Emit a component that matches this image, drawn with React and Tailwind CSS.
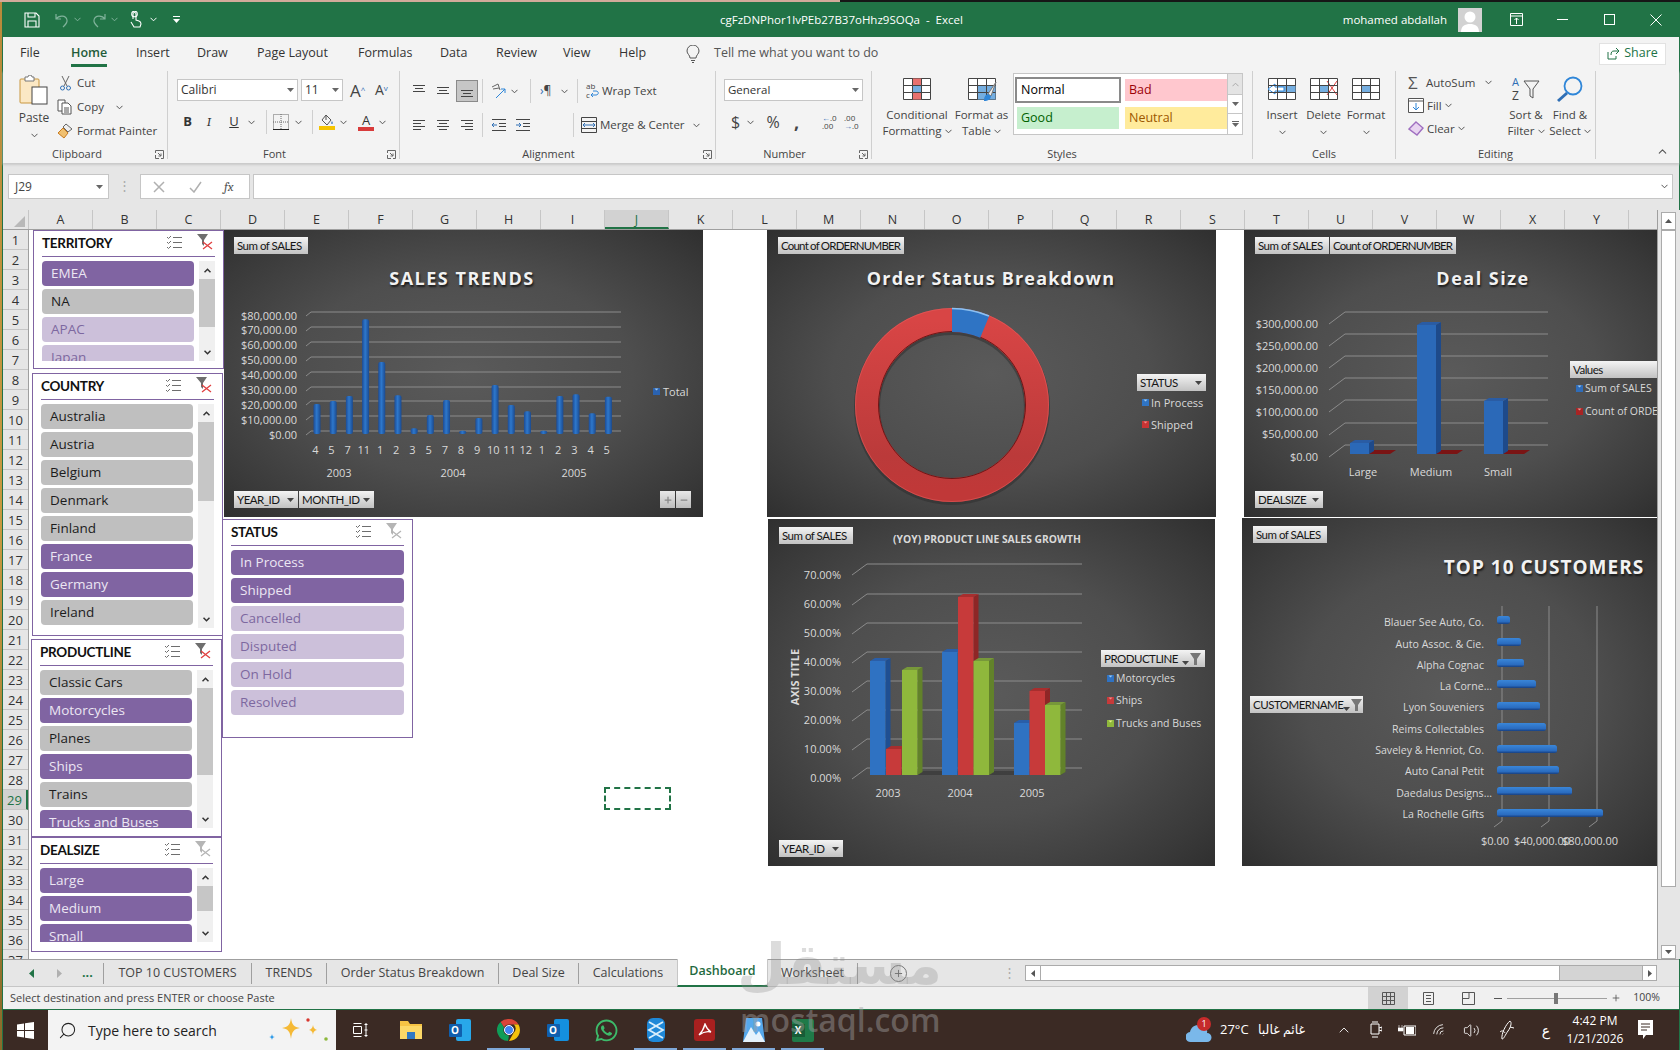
import React from "react";
import { FaWhatsapp } from "react-icons/fa";
import { Search, ChevronUp, Wifi, Volume2, Plus, Minus } from "lucide-react";

const lato = "font-['Lato',sans-serif]";

const Chev = ({ className = "", color = "#555", weight = 1 }) => (
  <svg width="7" height="5" viewBox="0 0 7 5" className={className} fill="none" stroke={color} strokeWidth={weight}>
    <path d="M.5 .8 3.5 3.8 6.5 .8" />
  </svg>
);
const Tri = ({ color = "#444" }) => (
  <svg width="7" height="4" viewBox="0 0 9 5" className="shrink-0"><path d="M0 0h9L4.5 5z" fill={color} /></svg>
);
const Sep = () => <div className="w-px h-[24px] bg-[#cfcfcf] shrink-0" />;

/* ---- quick access ---- */
const QuickAccess = () => (
  <div className="w-[717px] flex items-center pl-[21px] shrink-0">
    <svg width="16" height="16" viewBox="0 0 16 16" fill="none" stroke="#fff" strokeWidth="1.1">
      <path d="M1 1h11l3 3v11H1z" /><path d="M4 1v4h7V1M4 15v-6h8v6" />
    </svg>
    <svg width="16" height="16" viewBox="0 0 16 16" fill="none" stroke="#7fb29a" strokeWidth="1.2" className="ml-[14px]">
      <path d="M2 2v5h5M2 7c3-4 10-4 11 1 .6 3-2 5-4 7" />
    </svg>
    <Chev className="ml-[4px]" color="#7fb29a" />
    <svg width="16" height="16" viewBox="0 0 16 16" fill="none" stroke="#7fb29a" strokeWidth="1.2" className="ml-[10px]">
      <path d="M14 2v5H9M14 7C11 3 4 3 3 8c-.6 3 2 5 4 7" />
    </svg>
    <Chev className="ml-[4px]" color="#7fb29a" />
    <svg width="14" height="17" viewBox="0 0 14 17" fill="none" stroke="#fff" strokeWidth="1.1" className="ml-[10px]">
      <path d="M5 8V3a1.5 1.5 0 0 1 3 0v6l3 1c1.500.5 2 1 2 3l-1 3H6L3 11" /><circle cx="6.500" cy="3" r="2.800" />
    </svg>
    <Chev className="ml-[8px]" color="#fff" />
    <svg width="9" height="9" viewBox="0 0 9 9" fill="#fff" className="ml-[15px]"><path d="M1 1h7v1H1zM1 4h7L4.500 8z" /></svg>
  </div>
);

const TitleBar = () => (
  <div className="h-[35px] bg-[#217346] flex items-center text-white shrink-0">
    <QuickAccess />
    <span className="text-[11.5px] whitespace-nowrap">cgFzDNPhor1lvPEb27B37oHhz9SOQa&nbsp; -&nbsp; Excel</span>
    <div className="ml-auto flex items-center">
      <span className="text-[11.5px] mr-[11px] whitespace-nowrap">mohamed abdallah</span>
      <div className="w-[24px] h-[24px] bg-[#d2d2d2] flex items-end justify-center overflow-hidden mr-[11px]">
        <svg width="20" height="22" viewBox="0 0 20 22" fill="#fff"><circle cx="10" cy="7" r="5.500" /><path d="M1 22c0-6 4-8 9-8s9 2 9 8z" /></svg>
      </div>
      <div className="w-[46px] flex justify-center">
        <svg width="13" height="13" viewBox="0 0 13 13" fill="none" stroke="#fff"><path d="M.5 .5h12v12H.5zM.5 3h12M6.500 11V5M4.500 7l2-2 2 2" /></svg>
      </div>
      <div className="w-[47px] flex justify-center"><div className="w-[11px] h-px bg-white" /></div>
      <div className="w-[47px] flex justify-center"><div className="w-[11px] h-[11px] border border-white" /></div>
      <div className="w-[46px] flex justify-center">
        <svg width="12" height="12" viewBox="0 0 12 12" stroke="#fff"><path d="M.5 .5l11 11M11.500 .5l-11 11" /></svg>
      </div>
    </div>
  </div>
);

const menuItems = [
  ["File", "w-[51px]"], ["Home", "w-[65px]"], ["Insert", "w-[61px]"], ["Draw", "w-[60px]"],
  ["Page Layout", "w-[101px]"], ["Formulas", "w-[82px]"], ["Data", "w-[56px]"], ["Review", "w-[67px]"],
  ["View", "w-[56px]"], ["Help", "w-[67px]"],
];

const MenuBar = () => (
  <div className="h-[33px] bg-[#f3f3f3] flex items-center pl-[17px] text-[12.5px] text-[#333] shrink-0">
    {menuItems.map(([name, w]) => (
      <div key={name} className={w}>
        <span className={name === "Home" ? "relative font-semibold text-[#1f5c3a]" : ""}>
          {name}
          {name === "Home" && <span className="absolute left-0 right-0 top-[20px] h-[3px] bg-[#217346]" />}
        </span>
      </div>
    ))}
    <svg width="14" height="18" viewBox="0 0 14 18" fill="none" stroke="#555" className="mr-[14px]">
      <path d="M4 13c0-3-3-4-3-7a6 6 0 0 1 12 0c0 3-3 4-3 7zM5 15.500h4M6 17.500h2" />
    </svg>
    <span className="text-[#555]">Tell me what you want to do</span>
    <div className="ml-auto mr-[13px] w-[67px] h-[22px] bg-white border border-[#e2e2e2] flex items-center justify-center gap-[4px] text-[#217346] font-medium">
      <svg width="13" height="13" viewBox="0 0 13 13" fill="none" stroke="#217346"><path d="M9 1l3 3-3 3M12 4H7C5 4 4 5 4 8M1 5v7h8v-3" /></svg>
      Share
    </div>
  </div>
);

/* ---- ribbon ---- */
const Group = ({ label, width, launcher = true, labelClass = "", children }) => (
  <div className={`relative h-[88px] mt-[1px] border-r border-[#cfcfcf] flex flex-col shrink-0 ${width}`}>
    <div className="h-[78px]">{children}</div>
    <div className={`text-center text-[11px] leading-[10px] text-[#444] ${labelClass}`}>{label}</div>
    {launcher && (
      <svg width="9" height="9" viewBox="0 0 9 9" fill="none" stroke="#666" className="absolute right-[3px] bottom-[0px]">
        <path d="M.5 3V.5H8.500V8.500H6M3 3l3 3M6 3.500V6H3.500M.5 5v3.500H4" />
      </svg>
    )}
  </div>
);

const PasteIcon = () => (
  <svg width="30" height="30" viewBox="0 0 30 30">
    <rect x="1" y="4" width="19" height="24" rx="1" fill="#fbe8c4" stroke="#c8963e" />
    <path d="M6 4V2h3a2 2 0 0 1 4 0h2v4H6z" fill="#fff" stroke="#777" />
    <rect x="13" y="12" width="15" height="17" fill="#fff" stroke="#444" />
  </svg>
);
const CutIcon = () => (
  <svg width="13" height="16" viewBox="0 0 13 16" fill="none" stroke="#666">
    <path d="M3 1l5 10M10 1 5 11" />
    <circle cx="3.500" cy="13" r="2" stroke="#2f6fb5" /><circle cx="9.500" cy="13" r="2" stroke="#2f6fb5" />
  </svg>
);
const CopyIcon = () => (
  <svg width="16" height="16" viewBox="0 0 16 16" fill="#fff" stroke="#555">
    <path d="M1 1h7v11H1z" /><path d="M5 4h6l3 3v8H5z" /><path d="M7 9h5M7 11h5M7 13h5" />
  </svg>
);
const PainterIcon = () => (
  <svg width="16" height="16" viewBox="0 0 16 16" fill="none">
    <path d="M9 1l6 5-4 3-5-5z" fill="#eee" stroke="#666" />
    <path d="M6 5l5 5-4 5-6-5z" fill="#f0c070" stroke="#c87a1e" />
  </svg>
);

const Clipboard = () => (
  <Group label="Clipboard" width="w-[165px]" labelClass="pr-[16px]">
    <div className="flex h-full">
      <div className="w-[46px] ml-[8px] flex flex-col items-center pt-[4px] shrink-0 text-[12px] text-[#444]">
        <PasteIcon />
        <span className="mt-[4px] leading-[18px]">Paste</span>
        <Chev className="mt-[6px]" />
      </div>
      <div className="flex flex-col text-[11.5px] text-[#444]">
        <div className="h-[24px] flex items-center gap-[5px] pl-[2px]"><CutIcon /> Cut</div>
        <div className="h-[24px] flex items-center gap-[4px]"><CopyIcon /> Copy <Chev className="ml-[8px]" /></div>
        <div className="h-[24px] flex items-center gap-[4px] whitespace-nowrap"><PainterIcon /> Format Painter</div>
      </div>
    </div>
  </Group>
);

const Box = ({ className = "", children }) => (
  <div className={`h-[22px] bg-white border border-[#c6c6c6] flex items-center justify-between px-[3px] text-[12px] text-[#333] shrink-0 ${className}`}>
    {children}
  </div>
);

const FontGroup = () => (
  <Group label="Font" width="w-[232px]" labelClass="pr-[18px]">
    <div className="flex items-center pl-[9px] mt-[8px]">
      <Box className="w-[121px]"><span>Calibri</span><Tri color="#666" /></Box>
      <Box className="w-[42px] ml-[3px]"><span>11</span><Tri color="#666" /></Box>
      <span className="ml-[7px] w-[16px] text-[17px] leading-none text-[#444]">A<sup className="text-[8px] text-[#2f6fb5]">^</sup></span>
      <span className="ml-[9px] w-[14px] text-[14px] leading-none text-[#444]">A<sup className="text-[8px] text-[#2f6fb5]">v</sup></span>
    </div>
    <div className="flex items-center mt-[10px] h-[22px] text-[13px] text-[#333]">
      <div className="w-[24px] text-right font-bold">B</div>
      <div className="w-[34px] text-center italic font-serif">I</div>
      <div className="w-[16px] text-center underline">U</div>
      <Chev className="ml-[6px]" />
      <div className="w-[11px]" />
      <Sep />
      <svg width="16" height="16" viewBox="0 0 16 16" fill="none" stroke="#666" strokeDasharray="1 1" className="ml-[6px]">
        <path d="M.5 .5h15v15H.5zM8 0v16M0 8h16" /><path d="M0 15.500h16" stroke="#222" strokeDasharray="0" />
      </svg>
      <Chev className="ml-[6px]" />
      <div className="w-[10px]" />
      <Sep />
      <div className="ml-[6px] w-[16px] flex flex-col items-center">
        <svg width="14" height="12" viewBox="0 0 14 12" fill="none" stroke="#555"><path d="M6 1l5 5-4 5-5-5zM6 1v5" /><path d="M12 7c1 2 1 3 0 3s-1-1 0-3z" fill="#2f6fb5" stroke="none" /></svg>
        <div className="w-[16px] h-[4px] bg-[#f5c400]" />
      </div>
      <Chev className="ml-[5px]" />
      <div className="ml-[11px] w-[16px] flex flex-col items-center leading-none">
        <span className="text-[13px] leading-[12px] text-[#333]">A</span>
        <div className="w-[16px] h-[4px] mt-[1px] bg-[#d83b3b]" />
      </div>
      <Chev className="ml-[5px]" />
    </div>
  </Group>
);

const Lines = ({ d }) => (
  <svg width="14" height="14" viewBox="0 0 14 14" stroke="#444" fill="none"><path d={d} /></svg>
);
const Cell = ({ className = "", children }) => (
  <div className={`h-[22px] flex items-center justify-center shrink-0 ${className}`}>{children}</div>
);

const Alignment = () => (
  <Group label="Alignment" width="w-[316px]" labelClass="pr-[18px]">
    <div className="flex items-center pl-[7px] mt-[8px] text-[11.5px] text-[#444]">
      <Cell className="w-[24px]"><Lines d="M1 1.500h12M3 4.500h8M1 7.500h12" /></Cell>
      <Cell className="w-[24px]"><Lines d="M1 3.500h12M3 6.500h8M1 9.500h12" /></Cell>
      <Cell className="w-[22px] ml-[1px] bg-[#c6c6c6] border border-[#8a8a8a]"><Lines d="M1 6.500h12M3 9.500h8M1 12.500h12" /></Cell>
      <div className="w-[4px]" />
      <Sep />
      <svg width="17" height="17" viewBox="0 0 17 17" fill="none" stroke="#666" className="ml-[7px]">
        <path d="M2 4l6-3 2 6M3 6l6-1" /><path d="M6 15 15 6M15 6h-4M15 6v4" stroke="#2f86d8" />
      </svg>
      <Chev className="ml-[4px]" />
      <div className="w-[12px]" />
      <Sep />
      <span className="ml-[9px] w-[16px] text-[12px] leading-none"><span className="text-[#2f6fb5]">›</span>¶</span>
      <Chev className="ml-[5px]" />
      <div className="w-[9px]" />
      <Sep />
      <svg width="16" height="18" viewBox="0 0 16 18" fill="none" className="ml-[7px]">
        <text x="1" y="7" fontSize="8" fill="#444">ab</text><text x="1" y="16" fontSize="8" fill="#444">c</text>
        <path d="M6 13h5c3 0 3-4 0-4H8M8 11l-2 2 2 2" stroke="#2f86d8" />
      </svg>
      <span className="ml-[1px] whitespace-nowrap">Wrap Text</span>
    </div>
    <div className="flex items-center pl-[7px] mt-[10px] text-[11.5px] text-[#444]">
      <Cell className="w-[24px]"><Lines d="M1 2.500h12M1 5.500h8M1 8.500h12M1 11.500h8" /></Cell>
      <Cell className="w-[24px]"><Lines d="M1 2.500h12M3 5.500h8M1 8.500h12M3 11.500h8" /></Cell>
      <Cell className="w-[23px]"><Lines d="M1 2.500h12M5 5.500h8M1 8.500h12M5 11.500h8" /></Cell>
      <div className="w-[4px]" />
      <Sep />
      <svg width="15" height="14" viewBox="0 0 15 14" fill="none" stroke="#444" className="ml-[8px]">
        <path d="M1 1.500h14M8 5.500h7M8 8.500h7M1 12.500h14" /><path d="M6 7H1M3 5 1 7l2 2" stroke="#2f6fb5" />
      </svg>
      <svg width="15" height="14" viewBox="0 0 15 14" fill="none" stroke="#444" className="ml-[9px]">
        <path d="M1 1.500h14M8 5.500h7M8 8.500h7M1 12.500h14" /><path d="M1 7h5M4 5l2 2-2 2" stroke="#2f6fb5" />
      </svg>
      <div className="w-[43px]" />
      <Sep />
      <svg width="16" height="16" viewBox="0 0 16 16" fill="none" stroke="#444" className="ml-[7px]">
        <path d="M.5 .5h15v15H.5zM0 4.500h16M0 11.500h16" /><path d="M2 8h12M4 6 2 8l2 2M12 6l2 2-2 2" stroke="#2f6fb5" />
      </svg>
      <span className="ml-[3px] whitespace-nowrap">Merge &amp; Center</span>
      <Chev className="ml-[8px]" />
    </div>
  </Group>
);

const NumberGroup = () => (
  <Group label="Number" width="w-[156px]" labelClass="pr-[18px]">
    <div className="pl-[8px] mt-[8px]"><Box className="w-[139px]"><span className="text-[11.5px]">General</span><Tri color="#666" /></Box></div>
    <div className="flex items-center pl-[14px] mt-[10px] h-[22px] text-[16px] text-[#444]">
      <span className="w-[11px] text-center">$</span>
      <Chev className="ml-[6px]" />
      <span className="ml-[11px] w-[16px] text-center">%</span>
      <span className="ml-[13px] w-[8px] font-bold text-[18px] leading-[14px]">,</span>
      <div className="ml-[20px] w-[16px] text-[8px] leading-[8px] whitespace-nowrap"><span className="text-[#2f6fb5]">←</span>.0<br />.00</div>
      <div className="ml-[6px] w-[16px] text-[8px] leading-[8px] whitespace-nowrap">.00<br /><span className="text-[#2f6fb5]">→</span>.0</div>
    </div>
  </Group>
);

const GridIcon = ({ children, w = 28 }) => (
  <svg width={w} height="22" viewBox="0 0 28 22" fill="#fff" stroke="#444" strokeWidth="1">
    <path d="M.5 .5h27v21H.5z" />
    {children}
    <path d="M.5 7.500h27M.5 14.500h27M9.500 .5v21M18.500 .5v21" fill="none" />
  </svg>
);

const CondIcon = () => (
  <GridIcon>
    <path d="M9.500 .5h9v7h-9zM9.500 14.500h9v7h-9z" fill="#e8716f" stroke="none" />
    <path d="M9.500 7.500h9v7h-9z" fill="#75aee0" stroke="none" />
  </GridIcon>
);
const TableIcon = () => (
  <div className="relative">
    <GridIcon><path d="M9.500 7.500h18v14h-18z" fill="#75aee0" stroke="none" /></GridIcon>
    <svg width="16" height="22" viewBox="0 0 16 22" className="absolute left-[14px] top-[3px]" fill="none">
      <path d="M14 1 6 13l3 2z" fill="#eee" stroke="#777" /><path d="M6 13c-3 1-4 3-4 7 4 0 7-2 7-5z" fill="#2f86d8" />
    </svg>
  </div>
);

const StyleBtn = ({ icon, top, bottom, width }) => (
  <div className={`flex flex-col items-center shrink-0 text-[11.5px] leading-[16px] text-[#444] whitespace-nowrap ${width}`}>
    <div className="h-[22px] mt-[7px] mb-[7px]">{icon}</div>
    <span>{top}</span>
    {bottom !== "" && <span className="flex items-center gap-[3px]">{bottom}<Chev /></span>}
  </div>
);

const StyleCell = ({ className, children }) => (
  <div className={`h-[22px] flex items-center pl-[4px] text-[12.5px] ${className}`}>{children}</div>
);

const Styles = () => (
  <Group label="Styles" width="w-[381px]" launcher={false}>
    <div className="flex">
      <StyleBtn width="w-[80px] ml-[5px]" icon={<CondIcon />} top="Conditional" bottom="Formatting" />
      <StyleBtn width="w-[49px]" icon={<TableIcon />} top="Format as" bottom="Table" />
      <div className="ml-[7px] mt-[2px] w-[230px] h-[62px] bg-white border border-[#c6c6c6] flex shrink-0">
        <div className="grid grid-cols-2 gap-x-[6px] gap-y-[6px] pl-[3px] pt-[5px] w-[213px] content-start">
          <StyleCell className="bg-white outline-2 outline-[#8a8a8a] text-black">Normal</StyleCell>
          <StyleCell className="bg-[#ffc7ce] text-[#9c0006]">Bad</StyleCell>
          <StyleCell className="bg-[#c6efce] text-[#006100]">Good</StyleCell>
          <StyleCell className="bg-[#ffeb9c] text-[#9c5700]">Neutral</StyleCell>
        </div>
        <div className="flex flex-col ml-auto w-[15px] border-l border-[#c6c6c6]">
          <div className="h-[20px] bg-[#e4e4e4] flex items-center justify-center"><Chev color="#aaa" className="rotate-180" /></div>
          <div className="h-[20px] border-y border-[#c6c6c6] flex items-center justify-center"><Tri color="#666" /></div>
          <div className="flex-1 flex flex-col items-center justify-center gap-[1px]"><div className="w-[7px] h-px bg-[#666]" /><Tri color="#666" /></div>
        </div>
      </div>
    </div>
  </Group>
);

const Cells = () => (
  <Group label="Cells" width="w-[143px]" launcher={false}>
    <div className="flex pl-[9px]">
      <StyleBtn width="w-[40px]" icon={
        <GridIcon w={30}>
          <path d="M9.500 7.500h18v7h-18z" fill="#75aee0" stroke="none" />
          <path d="M0 11l7-5v3h9v4H7v3z" fill="#fff" stroke="#2f86d8" />
        </GridIcon>} top="Insert" bottom="" />
      <StyleBtn width="w-[43px]" icon={
        <GridIcon>
          <path d="M9.500 7.500h9v7h-9z" fill="#75aee0" stroke="none" />
          <path d="M17 3l10 14M27 3 17 17" stroke="#e04040" fill="none" />
        </GridIcon>} top="Delete" bottom="" />
      <StyleBtn width="w-[42px]" icon={
        <GridIcon>
          <path d="M9.500 7.500h9v7h-9z" fill="#75aee0" stroke="none" />
        </GridIcon>} top="Format" bottom="" />
    </div>
    <div className="flex pl-[9px] mt-[7px]">
      <div className="w-[40px] flex justify-center"><Chev /></div>
      <div className="w-[43px] flex justify-center"><Chev /></div>
      <div className="w-[42px] flex justify-center"><Chev /></div>
    </div>
  </Group>
);

const Editing = () => (
  <Group label="Editing" width="w-[200px]" launcher={false}>
    <div className="flex text-[11.5px] text-[#444]">
      <div className="w-[108px] pl-[12px] shrink-0 flex flex-col">
        <div className="h-[23px] flex items-center gap-[5px] whitespace-nowrap">
          <span className="w-[13px] text-[17px] leading-none text-[#555]">Σ</span> AutoSum <Chev className="ml-[5px]" />
        </div>
        <div className="h-[23px] flex items-center gap-[3px]">
          <svg width="16" height="15" viewBox="0 0 16 15" fill="#fff" stroke="#555"><path d="M.5 .5h15v14H.5zM0 3h16" /><path d="M8 5v7M5 9l3 3 3-3" stroke="#2f86d8" fill="none" /></svg>
          Fill <Chev />
        </div>
        <div className="h-[23px] flex items-center gap-[3px]">
          <svg width="16" height="15" viewBox="0 0 16 15"><path d="M8 1l7 6-6 7-8-6z" fill="#e8d4f0" stroke="#9f6fc0" strokeWidth="1.400" /></svg>
          Clear <Chev />
        </div>
      </div>
      <div className="flex flex-col items-center w-[44px] shrink-0 leading-[16px] whitespace-nowrap">
        <svg width="30" height="26" viewBox="0 0 30 26" fill="none" className="mt-[5px] mb-[5px]">
          <text x="1" y="10" fontSize="11" fill="#2f6fb5">A</text><text x="1" y="24" fontSize="12" fill="#444">Z</text>
          <path d="M13 5h15l-6 8v9l-3-2v-7z" stroke="#555" />
        </svg>
        <span>Sort &amp;</span>
        <span className="flex items-center gap-[3px]">Filter <Chev /></span>
      </div>
      <div className="flex flex-col items-center w-[44px] shrink-0 leading-[16px] whitespace-nowrap">
        <svg width="30" height="28" viewBox="0 0 30 28" fill="none" className="mt-[4px] mb-[4px]">
          <circle cx="18" cy="11" r="8.500" stroke="#2f86d8" strokeWidth="1.800" /><path d="M12 18 3 26" stroke="#2f6fb5" strokeWidth="3" />
        </svg>
        <span>Find &amp;</span>
        <span className="flex items-center gap-[3px]">Select <Chev /></span>
      </div>
    </div>
  </Group>
);

const Ribbon = () => (
  <div className="h-[93px] bg-[#f3f3f3] flex shrink-0 relative shadow-[0_2px_2px_#c9c9c9]">
    <Clipboard />
    <FontGroup />
    <Alignment />
    <NumberGroup />
    <Styles />
    <Cells />
    <Editing />
    <div className="flex-1 flex items-end justify-end pr-[10px] pb-[5px]"><ChevronUp size={13} color="#555" /></div>
  </div>
);

const FormulaBar = () => (
  <div className="h-[45px] bg-[#e6e6e6] flex items-start pt-[9px] pl-[5px] shrink-0">
    <div className="w-[101px] h-[25px] bg-white border border-[#c6c6c6] flex items-center justify-between pl-[6px] pr-[5px] text-[12px] text-[#444]">
      J29 <Tri color="#666" />
    </div>
    <div className="w-[31px] flex justify-center text-[#aaa] text-[13px] leading-[22px]">⋮</div>
    <div className="w-[110px] h-[25px] bg-white border border-[#c6c6c6] flex items-center text-[#aaa] shrink-0">
      <svg width="12" height="12" viewBox="0 0 12 12" stroke="#b0b0b0" strokeWidth="1.500" className="ml-[12px]"><path d="M1 1l10 10M11 1 1 11" /></svg>
      <svg width="13" height="12" viewBox="0 0 13 12" stroke="#b0b0b0" strokeWidth="1.500" fill="none" className="ml-[24px]"><path d="M1 7l4 4 7-10" /></svg>
      <span className="ml-[22px] italic font-serif text-[13px] text-[#555]">fx</span>
    </div>
    <div className="ml-[3px] w-[1420px] h-[25px] bg-white border border-[#c6c6c6] flex items-center justify-end pr-[4px]"><Chev /></div>
  </div>
);

/* ---- sheet chrome ---- */
const cols = "ABCDEFGHIJKLMNOPQRSTUVWXY".split("");
const ColHeaders = () => (
  <div className="h-[20px] flex bg-[#e6e6e6] border-b border-[#9f9f9f] shrink-0 text-[12.5px] text-[#333]">
    <div className="w-[26px] border-r border-[#c6c6c6] flex items-end justify-end pr-[3px] pb-[2px]">
      <svg width="11" height="11"><path d="M11 0v11H0z" fill="#b8b8b8" /></svg>
    </div>
    {cols.map((c) => (
      <div key={c} className={`w-[64px] text-center leading-[19px] border-r border-[#c6c6c6] ${c === "J" ? "bg-[#d2d2d2] border-b-2 border-b-[#217346] text-[#217346]" : ""}`}>
        {c}
      </div>
    ))}
  </div>
);

const rows = Array.from({ length: 37 }, (_, i) => i + 1);
const RowHeaders = () => (
  <div className="w-[26px] shrink-0 bg-[#e6e6e6] border-r border-[#9f9f9f] overflow-hidden text-[13px] text-[#333]">
    {rows.map((r) => (
      <div key={r} className={`h-[20px] text-center leading-[20px] border-b border-[#c6c6c6] ${r === 29 ? "bg-[#d2d2d2] text-[#217346] border-r-2 border-r-[#217346]" : ""}`}>
        {r}
      </div>
    ))}
  </div>
);

/* ---- slicers ---- */
const MultiIcon = () => (
  <svg width="16" height="15" viewBox="0 0 16 15" fill="none" stroke="#6e6e6e">
    <path d="M1 2l1.500 1.500L5 1M1 7l1.500 1.500L5 6M1 12l1.500 1.500L5 11M7 2.500h9M7 7.500h9M7 12.500h9" />
  </svg>
);
const ClearIcon = ({ active }) => (
  <svg width="16" height="16" viewBox="0 0 16 16">
    <path d="M0 0h11L7 6v6L5 10V6z" fill={active ? "#6e6e6e" : "#b5b5b5"} />
    <path d="M6 8l9 7M15 8l-9 7" stroke={active ? "#e04040" : "#b5b5b5"} strokeWidth="1.300" />
  </svg>
);

const Item = ({ name, state }) => {
  const style =
    state === "on" ? "bg-[#8064a2] text-[#ece6f3]" :
    state === "dim" ? "bg-[#ccc0da] text-[#7d68a0]" :
    "bg-[#bfbfbf] text-[#1c1c1c]";
  return (
    <div className={`h-[25px] shrink-0 rounded-[4px] pl-[9px] text-[13.5px] leading-[25px] ${style}`}>{name}</div>
  );
};

const Slicer = ({ title, items, boxClass, listClass, thumbClass, clear = true, noScroll = false }) => (
  <div className={`border border-[#8064a2] bg-white px-[8px] shrink-0 ${boxClass}`}>
    <div className="h-[26px] flex items-center border-b border-[#8064a2] -mb-px pb-[1px]">
      <span className={`${lato} font-bold text-[13.5px] tracking-[-0.3px] text-[#111]`}>{title}</span>
      <div className="ml-auto flex items-center gap-[15px] -mt-[2px] pr-[2px]">
        <MultiIcon />
        <ClearIcon active={clear} />
      </div>
    </div>
    <div className="flex justify-between mt-[5px]">
      <div className={`flex flex-col gap-[3px] overflow-hidden ${noScroll ? "w-[173px]" : "w-[152px]"} ${listClass}`}>
        {items.map(([n, s]) => <Item key={n} name={n} state={s} />)}
      </div>
      {!noScroll && (
        <div className={`w-[16px] bg-[#f0f0f0] flex flex-col ${listClass}`}>
          <div className="h-[18px] flex items-center justify-center shrink-0"><Chev color="#333" weight={1.500} className="rotate-180" /></div>
          <div className={`bg-[#c6c6c6] shrink-0 ${thumbClass}`} />
          <div className="flex-1" />
          <div className="h-[18px] flex items-center justify-center shrink-0"><Chev color="#333" weight={1.500} /></div>
        </div>
      )}
    </div>
  </div>
);

/* ---- charts ---- */
const chartBg = "bg-[radial-gradient(ellipse_at_center,#5a5a5a_0%,#4e4e4e_50%,#393939_85%,#2f2f2f_100%)]";
const txt = "font-['Open_Sans',sans-serif]";

const Field = ({ className, label, arrow = true, filter = false }) => (
  <div className={`absolute h-[17px] flex items-center pl-[3px] pr-[4px] justify-between bg-gradient-to-b from-[#f4f4f4] to-[#c2c2c2] ${lato} text-[11.5px] tracking-[-0.5px] text-[#161616] whitespace-nowrap ${className}`}>
    <span>{label}</span>
    {filter ? (
      <span className="flex items-end gap-[1px]">
        <Tri color="#444" />
        <svg width="11" height="12" viewBox="0 0 11 12"><path d="M0 0h11L7 6v6H4V6z" fill="#777" /></svg>
      </span>
    ) : arrow && <Tri color="#444" />}
  </div>
);

const Marker = ({ x, y, c, h = "#9cc8f0" }) => (
  <g>
    <rect x={x} y={y - 4} width="7" height="7" fill={c} />
    <path d={`M${x + 1.500} ${y - 3.500}h4l-2 2z`} fill={h} />
  </g>
);

const Title = ({ x, y, size = 18, spacing = 1.500, children }) => (
  <text x={x} y={y} textAnchor="middle" dominantBaseline="central" fontSize={size} fontWeight="700" fill="#f2f2f2" letterSpacing={spacing} className={`${txt} [text-shadow:1px_2px_2px_#1a1a1a]`}>
    {children}
  </text>
);

const Label = ({ x, y, anchor = "start", size = 11, fill = "#d9d9d9", children }) => (
  <text x={x} y={y - 1} textAnchor={anchor} dominantBaseline="central" fontSize={size} fill={fill} className={txt}>{children}</text>
);

const Grid = ({ ys, x0, x1, dx, dy }) => (
  <g stroke="#8c8c8c" strokeWidth="1" fill="none">
    {ys.map((y) => <path key={y} d={`M${x0 - dx} ${y + dy} L${x0} ${y} H${x1}`} />)}
  </g>
);

const salesTop = [537, 528, 513, 283, 411, 511, 610, 570, 525, 617, 579, 480, 540, 559, 617, 513, 508, 565, 515];
const salesX = ["4", "5", "7", "11", "1", "2", "3", "5", "7", "8", "9", "10", "11", "12", "1", "2", "3", "4", "5"];
const salesY = ["$80,000.00", "$70,000.00", "$60,000.00", "$50,000.00", "$40,000.00", "$30,000.00", "$20,000.00", "$10,000.00", "$0.00"];

const SalesChart = () => (
  <div className={`relative w-[479px] h-[287px] shrink-0 ${chartBg}`}>
    <svg width="479" height="287" className="block">
      <defs>
        <linearGradient id="cyl" x1="0" x2="1" y1="0" y2="0">
          <stop offset="0" stopColor="#1c4c96" /><stop offset=".45" stopColor="#2e78cc" /><stop offset="1" stopColor="#1a4a90" />
        </linearGradient>
      </defs>
      <Title x={238} y={48}>SALES TRENDS</Title>
      <Grid ys={[82, 97, 112, 127, 142, 157, 171, 186, 201]} x0={87} x1={397} dx={5} dy={4} />
      {salesY.map((l, i) => <Label key={l} x={73} y={86 + i * 14.900} anchor="end">{l}</Label>)}
      {salesTop.map((t, i) => (
        <rect key={i} x={89.500 + i * 16.190} y={t / 3 - 5} width="7" height={204 - (t / 3 - 5)} rx="2" fill="url(#cyl)" />
      ))}
      {salesX.map((l, i) => <Label key={i} x={91.300 + i * 16.190} y={220} anchor="middle">{l}</Label>)}
      <Label x={115} y={243} anchor="middle">2003</Label>
      <Label x={229} y={243} anchor="middle">2004</Label>
      <Label x={350} y={243} anchor="middle">2005</Label>
      <Marker x={429} y={162} c="#2a62b0" />
      <Label x={439} y={162}>Total</Label>
    </svg>
    <Field className="left-[10px] top-[7px] w-[74px]" label="Sum of SALES" arrow={false} />
    <Field className="left-[10px] top-[261px] w-[64px]" label="YEAR_ID" />
    <Field className="left-[75px] top-[261px] w-[75px]" label="MONTH_ID" />
    <div className="absolute left-[436px] top-[261px] w-[15px] h-[17px] flex items-center justify-center bg-gradient-to-b from-[#e8e8e8] to-[#bdbdbd]"><Plus size={10} color="#888" strokeWidth={3} /></div>
    <div className="absolute left-[452px] top-[261px] w-[15px] h-[17px] flex items-center justify-center bg-gradient-to-b from-[#e8e8e8] to-[#bdbdbd]"><Minus size={10} color="#888" strokeWidth={3} /></div>
  </div>
);

const OrderChart = () => (
  <div className={`relative w-[449px] h-[287px] shrink-0 ${chartBg}`}>
    <svg width="449" height="287" className="block">
      <defs>
        <linearGradient id="ring" x1="0" x2="0" y1="0" y2="1">
          <stop offset="0" stopColor="#d84545" /><stop offset=".8" stopColor="#bb3a3a" /><stop offset="1" stopColor="#c03838" />
        </linearGradient>
      </defs>
      <Title x={224} y={48} spacing={1.200}>Order Status Breakdown</Title>
      <circle cx="185" cy="177" r="85" fill="none" stroke="#2c2c2c" strokeOpacity=".5" strokeWidth="26" />
      <circle cx="185" cy="175" r="85" fill="none" stroke="url(#ring)" strokeWidth="24" />
      <circle cx="185" cy="175" r="96.500" fill="none" stroke="#e86060" strokeOpacity=".5" />
      <circle cx="185" cy="175" r="73.500" fill="none" stroke="#6e1616" />
      <path d="M185 78 A97 97 0 0 1 222.400 85.500 L213.200 107.700 A73 73 0 0 0 185 102 Z" fill="#2f74c4" />
      <path d="M185 78.500 A96.500 96.500 0 0 1 222 86" fill="none" stroke="#8cc0f0" strokeWidth="1.500" />
      <Marker x={375} y={173} c="#2f74c4" />
      <Label x={384} y={173} size={11}>In Process</Label>
      <Marker x={375} y={195} c="#c83434" h="#f08a8a" />
      <Label x={384} y={195} size={11}>Shipped</Label>
    </svg>
    <Field className="left-[11px] top-[7px] w-[126px] tracking-[-0.8px]" label="Count of ORDERNUMBER" arrow={false} />
    <Field className="left-[370px] top-[144px] w-[69px]" label="STATUS" />
  </div>
);

const Bar3D = ({ x, w, top, base, front, side, cap, d = 5, u = 3 }) => (
  <g>
    <path d={`M${x + w} ${top} l${d} ${-u} V${base - u} l${-d} ${u} Z`} fill={side} />
    <path d={`M${x} ${top} l${d} ${-u} H${x + w + d} l${-d} ${u} Z`} fill={cap} />
    <rect x={x} y={top} width={w} height={base - top} fill={front} />
  </g>
);

const dealY = ["$300,000.00", "$250,000.00", "$200,000.00", "$150,000.00", "$100,000.00", "$50,000.00", "$0.00"];

const DealChart = () => (
  <div className={`relative w-[414px] h-[287px] shrink-0 overflow-hidden ${chartBg}`}>
    <svg width="414" height="287" className="block">
      <Title x={239} y={48}>Deal Size</Title>
      <Grid ys={[82, 104, 126, 148, 170, 193, 215]} x0={101} x1={304} dx={16} dy={12} />
      {dealY.map((l, i) => <Label key={l} x={74} y={94 + i * 22.170} anchor="end">{l}</Label>)}
      {[[106, 213], [173, 95], [240, 171]].map(([x, t]) => (
        <g key={x}>
          <path d={`M${x + 19} 224 l5 -4 h22 l-6 4 z`} fill="#7a1414" />
          <Bar3D x={x} w={19} top={t} base={224} front="#2b69b8" side="#1e4a8a" cap="#2a5ca4" />
        </g>
      ))}
      <Label x={119} y={242} anchor="middle">Large</Label>
      <Label x={187} y={242} anchor="middle">Medium</Label>
      <Label x={254} y={242} anchor="middle">Small</Label>
      <Marker x={332} y={159} c="#2f6cb8" />
      <Label x={341} y={159} size={10.500}>Sum of SALES</Label>
      <Marker x={332} y={182} c="#a82424" h="#ea9090" />
      <Label x={341} y={182} size={10.500}>Count of ORDERNUMBER</Label>
    </svg>
    <Field className="left-[11px] top-[7px] w-[74px]" label="Sum of SALES" arrow={false} />
    <Field className="left-[86px] top-[7px] w-[126px] tracking-[-0.8px]" label="Count of ORDERNUMBER" arrow={false} />
    <Field className="left-[326px] top-[131px] w-[100px]" label="Values" arrow={false} />
    <Field className="left-[11px] top-[261px] w-[68px]" label="DEALSIZE" />
  </div>
);

const yoyY = ["70.00%", "60.00%", "50.00%", "40.00%", "30.00%", "20.00%", "10.00%", "0.00%"];
const blue = { front: "#2f72c2", side: "#1f4f92", cap: "#2a5ea8" };
const red = { front: "#c73a3a", side: "#8e2626", cap: "#a82e2e" };
const green = { front: "#8fb83c", side: "#62822a", cap: "#77983a" };
const yoyBars = [
  [102, 142, blue], [118, 230, red], [134, 151, green],
  [174, 133, blue], [190, 78, red], [205.500, 142, green],
  [246, 204, blue], [261.500, 172, red], [277, 186, green],
];

const YoyChart = () => (
  <div className={`relative w-[447px] h-[347px] shrink-0 ${chartBg}`}>
    <svg width="447" height="347" className="block">
      <text x="219" y="20" textAnchor="middle" dominantBaseline="central" fontSize="10.300" fontWeight="700" fill="#d9d9d9" className={txt}>(YOY) PRODUCT LINE SALES GROWTH</text>
      <Grid ys={[45, 75, 104, 133, 162, 191, 220, 249]} x0={99} x1={314} dx={15} dy={11} />
      {yoyY.map((l, i) => <Label key={l} x={73} y={56 + i * 29} anchor="end">{l}</Label>)}
      <path d="M102 256 l5 -4 H298 l-5 4z" fill="#333" opacity=".6" />
      {yoyBars.map(([x, t, c]) => <Bar3D key={x} x={x} w={15.500} top={t} base={256} {...c} />)}
      <Label x={120} y={274} anchor="middle">2003</Label>
      <Label x={192} y={274} anchor="middle">2004</Label>
      <Label x={264} y={274} anchor="middle">2005</Label>
      <text x="26" y="158" transform="rotate(-90 26 158)" textAnchor="middle" dominantBaseline="central" fontSize="11" fontWeight="700" fill="#d9d9d9" className={txt}>AXIS TITLE</text>
      <Marker x={339} y={160} c="#2f72c2" />
      <Label x={348} y={160} size={10.500}>Motorcycles</Label>
      <Marker x={339} y={182} c="#c73a3a" h="#f08a8a" />
      <Label x={348} y={182} size={10.500}>Ships</Label>
      <Marker x={339} y={205} c="#8fb83c" h="#e6f08a" />
      <Label x={348} y={205} size={10.500}>Trucks and Buses</Label>
    </svg>
    <Field className="left-[11px] top-[8px] w-[74px]" label="Sum of SALES" arrow={false} />
    <Field className="left-[333px] top-[131px] w-[104px]" label="PRODUCTLINE" filter />
    <Field className="left-[11px] top-[321px] w-[64px]" label="YEAR_ID" />
  </div>
);

const customers = [
  ["Blauer See Auto, Co.", 105, 102, 268], ["Auto Assoc. & Cie.", 127, 124, 279], ["Alpha Cognac", 148, 145, 282],
  ["La Corne...", 169, 166, 294, 250], ["Lyon Souveniers", 190, 188, 298], ["Reims Collectables", 212, 209, 304],
  ["Saveley & Henriot, Co.", 233, 231, 315], ["Auto Canal Petit", 254, 252, 317],
  ["Daedalus Designs...", 276, 273, 330, 250], ["La Rochelle Gifts", 297, 295, 361],
];

const TopChart = () => (
  <div className={`relative w-[415px] h-[348px] shrink-0 overflow-hidden ${chartBg}`}>
    <svg width="415" height="348" className="block">
      <defs>
        <linearGradient id="hbar" x1="0" x2="0" y1="0" y2="1">
          <stop offset="0" stopColor="#3a86d8" /><stop offset=".7" stopColor="#2a6cc0" /><stop offset="1" stopColor="#173f80" />
        </linearGradient>
      </defs>
      <Title x={302} y={49} size={19} spacing={1}>TOP 10 CUSTOMERS</Title>
      <g stroke="#8c8c8c" fill="none">
        {[260, 307, 355].map((x) => <path key={x} d={`M${x} 88 V303 L${x - 8} 309`} />)}
      </g>
      {customers.map(([name, ly, by, end, right]) => (
        <g key={name}>
          <Label x={right || 242} y={ly} anchor="end" size={10.600}>{name}</Label>
          <rect x="255" y={by - 4} width={end - 255} height="8" rx="2.500" fill="url(#hbar)" />
        </g>
      ))}
      <Label x={253} y={323} anchor="middle">$0.00</Label>
      <Label x={300} y={323} anchor="middle">$40,000.00</Label>
      <Label x={348} y={323} anchor="middle">$80,000.00</Label>
    </svg>
    <Field className="left-[11px] top-[8px] w-[74px]" label="Sum of SALES" arrow={false} />
    <Field className="left-[8px] top-[178px] w-[113px]" label="CUSTOMERNAME" filter />
  </div>
);

const VScroll = () => (
  <div className="flex-1 bg-[#e6e6e6] border-l border-[#9f9f9f] flex flex-col items-center pl-[3px] pr-[4px]">
    <div className="w-[15px] h-[18px] mt-[2px] bg-white border border-[#ababab] flex items-center justify-center shrink-0"><svg width="7" height="4"><path d="M0 4h7L3.500 0z" fill="#555" /></svg></div>
    <div className="w-[15px] h-[657px] bg-white border border-[#ababab] shrink-0" />
    <div className="flex-1" />
    <div className="w-[15px] h-[14px] bg-white border border-[#ababab] flex items-center justify-center shrink-0"><svg width="7" height="4"><path d="M0 0h7L3.500 4z" fill="#555" /></svg></div>
  </div>
);

const Sheet = () => (
  <div className="relative w-[1628px] h-[729px] bg-white overflow-hidden flex shrink-0">
    <div className="w-[195px] shrink-0 flex flex-col">
      <Slicer title="TERRITORY" boxClass="ml-[4px] w-[191px] h-[139px]" listClass="h-[100px]" thumbClass="h-[48px]"
        items={[["EMEA", "on"], ["NA", "off"], ["APAC", "dim"], ["Japan", "dim"]]} />
      <Slicer title="COUNTRY" boxClass="ml-[3px] mt-[4px] w-[191px] h-[263px]" listClass="h-[224px]" thumbClass="h-[79px]"
        items={["Australia", "Austria", "Belgium", "Denmark", "Finland"].map((c) => [c, "off"]).concat([["France", "on"], ["Germany", "on"], ["Ireland", "off"]])} />
      <Slicer title="PRODUCTLINE" boxClass="ml-[2px] mt-[3px] w-[191px] h-[198px]" listClass="h-[158px]" thumbClass="h-[87px]"
        items={[["Classic Cars", "off"], ["Motorcycles", "on"], ["Planes", "off"], ["Ships", "on"], ["Trains", "off"], ["Trucks and Buses", "on"]]} />
      <Slicer title="DEALSIZE" clear={false} boxClass="ml-[2px] w-[191px] h-[115px]" listClass="h-[74px]" thumbClass="h-[25px]"
        items={[["Large", "on"], ["Medium", "on"], ["Small", "on"]]} />
    </div>
    <div className="w-[479px] shrink-0 flex flex-col">
      <SalesChart />
      <Slicer title="STATUS" noScroll clear={false} boxClass="-ml-[2px] mt-[2px] w-[191px] h-[219px]" listClass="h-[165px]"
        items={[["In Process", "on"], ["Shipped", "on"], ["Cancelled", "dim"], ["Disputed", "dim"], ["On Hold", "dim"], ["Resolved", "dim"]]} />
    </div>
    <div className="ml-[64px] w-[449px] shrink-0 flex flex-col items-center gap-[2px]">
      <OrderChart />
      <YoyChart />
    </div>
    <div className="ml-[26px] w-[416px] shrink-0 flex flex-col gap-px">
      <div className="pl-[2px]"><DealChart /></div>
      <TopChart />
    </div>
    {/* copied cell J29 */}
    <div className="absolute left-[575px] top-[557px] w-[67px] h-[23px] border-2 border-dashed border-[#217346]" />
  </div>
);

/* ---- tabs and status ---- */
const tabs = [
  ["TOP 10 CUSTOMERS", "w-[148px]"], ["TRENDS", "w-[75px]"], ["Order Status Breakdown", "w-[172px]"],
  ["Deal Size", "w-[80px]"], ["Calculations", "w-[99px]"],
];

const TabBar = () => (
  <div className="h-[28px] bg-[#e6e6e6] border-t border-[#9f9f9f] border-b border-b-[#c6c6c6] flex items-center text-[12.5px] text-[#444] shrink-0">
    <div className="w-[100px] flex items-center shrink-0 pl-[26px] text-[#217346]">
      <svg width="5" height="9"><path d="M5 0v9L0 4.500z" fill="#217346" /></svg>
      <svg width="5" height="9" className="ml-[23px]"><path d="M0 0v9l5-4.500z" fill="#b0b0b0" /></svg>
      <span className="ml-[20px] font-bold leading-[12px]">...</span>
    </div>
    {tabs.map(([t, w]) => (
      <div key={t} className={`h-[21px] border-l border-[#9f9f9f] flex items-center justify-center whitespace-nowrap shrink-0 ${w}`}>{t}</div>
    ))}
    <div className="w-[91px] h-[28px] -mt-px bg-white border-x border-[#c6c6c6] border-b-2 border-b-[#217346] font-semibold text-[#1f6a40] flex items-center justify-center shrink-0">Dashboard</div>
    <div className="w-[89px] text-center shrink-0">Worksheet</div>
    <div className="h-[21px] w-px bg-[#9f9f9f]" />
    <div className="ml-[32px] w-[17px] h-[17px] rounded-full border border-[#777] flex items-center justify-center shrink-0"><Plus size={11} color="#666" /></div>
    <div className="ml-[96px] text-[#aaa] leading-none">⋮</div>
    <div className="ml-[9px] w-[632px] h-[16px] flex border border-[#ababab] bg-[#d4d4d4] shrink-0">
      <div className="w-[15px] bg-white border-r border-[#ababab] flex items-center justify-center"><svg width="4" height="7"><path d="M4 0v7L0 3.500z" fill="#555" /></svg></div>
      <div className="w-[519px] bg-white border-r border-[#ababab]" />
      <div className="flex-1" />
      <div className="w-[14px] bg-white border-l border-[#ababab] flex items-center justify-center"><svg width="4" height="7"><path d="M0 0v7l4-3.500z" fill="#555" /></svg></div>
    </div>
  </div>
);

const StatusBar = () => (
  <div className="h-[22px] bg-[#f0f0f0] flex items-center pl-[7px] text-[11px] text-[#444] shrink-0">
    <span>Select destination and press ENTER or choose Paste</span>
    <div className="ml-auto flex items-center h-full">
      <div className="w-[40px] h-full bg-[#d2d2d2] flex items-center justify-center">
        <svg width="13" height="13" viewBox="0 0 13 13" fill="none" stroke="#555"><path d="M.5 .5h12v12H.5zM4.500 0v13M8.500 0v13M0 4.500h13M0 8.500h13" /></svg>
      </div>
      <div className="w-[40px] flex justify-center">
        <svg width="11" height="13" viewBox="0 0 11 13" fill="none" stroke="#555"><path d="M.5 .5h10v12H.5zM3 3.500h5M3 6.500h5M3 9.500h5" /></svg>
      </div>
      <div className="w-[40px] flex justify-center">
        <svg width="13" height="13" viewBox="0 0 13 13" fill="none" stroke="#555"><path d="M.5 .5h12v12H.5zM7 .5v6H.5" /></svg>
      </div>
      <div className="w-[8px] h-px bg-[#555] ml-[6px]" />
      <div className="relative w-[100px] h-px bg-[#a0a0a0] ml-[5px]">
        <div className="absolute left-[47px] -top-[5px] w-[4px] h-[11px] bg-[#777]" />
      </div>
      <Plus size={10} color="#555" className="ml-[4px]" />
      <span className="ml-[12px] mr-[19px] text-[10.5px]">100%</span>
    </div>
  </div>
);

/* ---- taskbar ---- */
const Slot = ({ width = "w-[49px]", active = false, children }) => (
  <div className={`relative h-full flex items-center justify-center shrink-0 ${width}`}>
    {children}
    {active && <div className="absolute bottom-0 left-[3px] right-[3px] h-[2px] bg-[#7fa8d8]" />}
  </div>
);

const OutlookIcon = ({ back = "bg-[#28a8ea]" }) => (
  <div className="relative w-[22px] h-[22px]">
    <div className={`absolute right-0 top-0 w-[15px] h-[22px] rounded-[2px] ${back}`} />
    <div className="absolute left-0 top-[5px] w-[13px] h-[13px] bg-[#0f5fae] rounded-[1px] text-white text-[10px] font-bold leading-[13px] text-center">O</div>
  </div>
);

const Taskbar = () => (
  <div className="h-[40px] bg-[#3b2a24] flex items-center text-white shrink-0">
    <Slot width="w-[45px]">
      <svg width="17" height="17" viewBox="0 0 17 17" fill="#fff"><path d="M0 2.500 7 1.500V8H0zM8 1.300 17 0v8H8zM0 9h7v6.500L0 14.500zM8 9h9v8l-9-1.300z" /></svg>
    </Slot>
    <div className="w-[288px] h-full bg-[#f3f3f3] flex items-center pl-[10px] text-[#222] text-[14px] shrink-0">
      <Search size={19} strokeWidth={1.300} className="-scale-x-100" color="#222" />
      <span className="ml-[11px]">Type here to search</span>
      <svg width="62" height="30" viewBox="0 0 62 30" className="ml-[50px]">
        <path d="M24 3c1 7 3 9 9 10-6 1-8 3-9 11-1-8-3-10-9-11 6-1 8-3 9-10z" fill="#f5b935" />
        <path d="M46 10c.500 3 1.500 4 4 5-2.500 .5-3.500 1.500-4 5-.5-3.500-1.500-4.500-4-5 2.500-1 3.500-2 4-5z" fill="#f5b935" />
        <path d="M5 19c.3 2 1 3 3 3-2 .4-2.700 1-3 3-.3-2-1-2.600-3-3 2 0 2.700-1 3-3z" fill="#2f9be8" />
        <circle cx="41" cy="5" r="1.700" fill="#d8382f" /><circle cx="59" cy="24" r="1.800" fill="#8cb83c" />
      </svg>
    </div>
    <Slot width="w-[50px]">
      <svg width="16" height="16" viewBox="0 0 16 16" fill="none" stroke="#fff"><path d="M.5 1.500h8M.5 14.500h8M.5 4.500h8v7h-8zM13 1v14" /><path d="M11.500 2.500h3M11.500 8h3M11.500 13.500h3" /></svg>
    </Slot>
    <Slot>
      <svg width="22" height="20" viewBox="0 0 22 20"><path d="M0 1h8l2 3h12v15H0z" fill="#f6c344" /><path d="M0 6h22v13H0z" fill="#fcd867" /><path d="M7 12h8v7H7z" fill="#2f78c4" /></svg>
    </Slot>
    <Slot><OutlookIcon /></Slot>
    <Slot active>
      <svg width="24" height="24" viewBox="0 0 24 24">
        <path d="M12 1a11 11 0 0 1 9.500 5.500H12a5.500 5.500 0 0 0-5 3L3.500 4A11 11 0 0 1 12 1z" fill="#db4437" />
        <path d="M21.500 6.500A11 11 0 0 1 12 23l4.500-8a5.500 5.500 0 0 0 .3-8.500z" fill="#f4c20d" />
        <path d="M3.500 4 7 9.500a5.500 5.500 0 0 0 5 8l-1 5.500A11 11 0 0 1 3.500 4z" fill="#0f9d58" />
        <circle cx="12" cy="12" r="4.500" fill="#4285f4" stroke="#fff" />
      </svg>
    </Slot>
    <Slot><OutlookIcon back="bg-[#1490df]" /></Slot>
    <Slot><FaWhatsapp size={25} color="#3dbb6a" /></Slot>
    <Slot active>
      <svg width="18" height="24" viewBox="0 0 18 24"><rect width="18" height="24" rx="6" fill="#1e88d8" /><path d="M2 4l14 8L2 20M16 4 2 12l14 8" stroke="#d8eefc" strokeWidth="1.800" fill="none" /></svg>
    </Slot>
    <Slot active>
      <div className="w-[21px] h-[22px] rounded-[3px] bg-[#a8201f] flex items-center justify-center">
        <svg width="14" height="14" viewBox="0 0 14 14" fill="none" stroke="#fff" strokeWidth="1.300"><path d="M7 1c-1 4-3 8-6 11 4-3 8-4 12-3-3-2-5-5-6-8z" /></svg>
      </div>
    </Slot>
    <Slot active>
      <svg width="22" height="24" viewBox="0 0 22 24"><path d="M3 0h16l3 24H0z" fill="#55a8ec" /><path d="M0 24 8 9l5 8 3-4 6 11z" fill="#e6f2fc" /><circle cx="15" cy="6" r="2.500" fill="#fff" /></svg>
    </Slot>
    <Slot active>
      <div className="relative w-[22px] h-[23px] bg-[#1f7a48] rounded-[2px]">
        <div className="absolute left-0 top-[5px] w-[13px] h-[13px] bg-[#185c37] text-white text-[10px] font-bold leading-[13px] text-center">X</div>
      </div>
    </Slot>
    <div className="ml-auto flex items-center h-full">
      <svg width="26" height="28" viewBox="0 0 26 28" className="mr-[8px]">
        <path d="M5 26a5 5 0 0 1-1-10c1-5 6-8 10-6 5-1 8 3 7 7a4.500 4.500 0 0 1 0 9z" fill="#7ab8ea" />
        <circle cx="18" cy="8" r="7" fill="#c62b2b" />
        <text x="18" y="11" fontSize="9" textAnchor="middle" fill="#fff">1</text>
      </svg>
      <span className="w-[38px] text-[13px] whitespace-nowrap">27°C</span>
      <span className="w-[52px] mr-[18px] text-[12.5px] font-['Noto_Sans','DejaVu_Sans',sans-serif] whitespace-nowrap">غائم غالبا</span>
      <div className="w-[32px] flex justify-center"><ChevronUp size={16} strokeWidth={1.300} /></div>
      <div className="w-[30px] flex justify-center">
        <svg width="13" height="18" viewBox="0 0 13 18" fill="none" stroke="#fff"><path d="M2 3h8v10H2zM10 7l3-1v4l-3-1M3 1h6M3 16h6" /></svg>
      </div>
      <div className="w-[34px] flex justify-center">
        <svg width="18" height="12" viewBox="0 0 18 12"><path d="M6 2h12v9H6z" fill="none" stroke="#fff" /><path d="M8 3h8v7H8z" fill="#fff" /><path d="M1 1v3M4 1v3M0 4h5v3H0z" fill="#fff" stroke="#fff" strokeWidth=".6" /></svg>
      </div>
      <div className="w-[30px] flex justify-center"><Wifi size={15} strokeWidth={1.300} className="-rotate-45" /></div>
      <div className="w-[34px] flex justify-center"><Volume2 size={17} strokeWidth={1.200} /></div>
      <div className="w-[38px] flex justify-center">
        <svg width="16" height="20" viewBox="0 0 16 20" fill="none" stroke="#fff"><path d="M3 19C2 14 7 4 11 1c2 1 1 6-2 10S5 19 3 19zM1 12c2-2 4-1 5 1M11 7l4 1" /></svg>
      </div>
      <div className="w-[40px] text-center text-[14px] font-['Noto_Sans','DejaVu_Sans',sans-serif]">ع</div>
      <div className="w-[58px] flex flex-col items-center text-[12px] leading-[18px] whitespace-nowrap">
        <span>4:42 PM</span>
        <span>1/21/2026</span>
      </div>
      <div className="w-[44px] flex justify-center">
        <svg width="16" height="20" viewBox="0 0 16 20"><path d="M0 0h15v15H8l-3 4v-4H0z" fill="#fff" /><path d="M3 4h9M3 7h9M3 10h6" stroke="#3b2a24" /></svg>
      </div>
      <div className="w-[11px]" />
    </div>
  </div>
);

export default function App() {
  return (
    <div className="relative w-[1680px] h-[1058px] bg-white overflow-hidden flex flex-col font-['Open_Sans',sans-serif]">
      <div className="h-[2px] bg-[linear-gradient(90deg,#d2aa9a_0%,#d2aa9a_50%,#161616_50%)] shrink-0" />
      <div className="flex h-[1048px] shrink-0">
        <div className="w-[2px] bg-[linear-gradient(180deg,#b88a3a,#c89a40,#8a6a2a)] shrink-0" />
        <div className="flex-1 flex flex-col min-w-0 border-l border-[#217346] border-r">
          <TitleBar />
          <MenuBar />
          <Ribbon />
          <div className="h-[2px] bg-[#e6e6e6] shrink-0" />
          <FormulaBar />
          <div className="flex h-[749px] shrink-0">
            <div className="w-[1654px] shrink-0 flex flex-col">
              <ColHeaders />
              <div className="flex h-[729px]">
                <RowHeaders />
                <Sheet />
              </div>
            </div>
            <VScroll />
          </div>
          <TabBar />
          <StatusBar />
          <div className="h-px bg-[#217346] shrink-0" />
          <Taskbar />
        </div>
      </div>
      <div className="absolute left-[762px] top-[935px] w-[180px] text-center text-[56px] leading-[60px] font-bold text-[#8c8c8c]/30 font-['DejaVu_Sans',sans-serif] pointer-events-none" dir="rtl">مستقل</div>
      <div className="absolute left-[740px] top-[1001px] text-[32px] leading-[38px] font-semibold text-[#a0a0a0]/45 pointer-events-none">mostaql.com</div>
    </div>
  );
}
